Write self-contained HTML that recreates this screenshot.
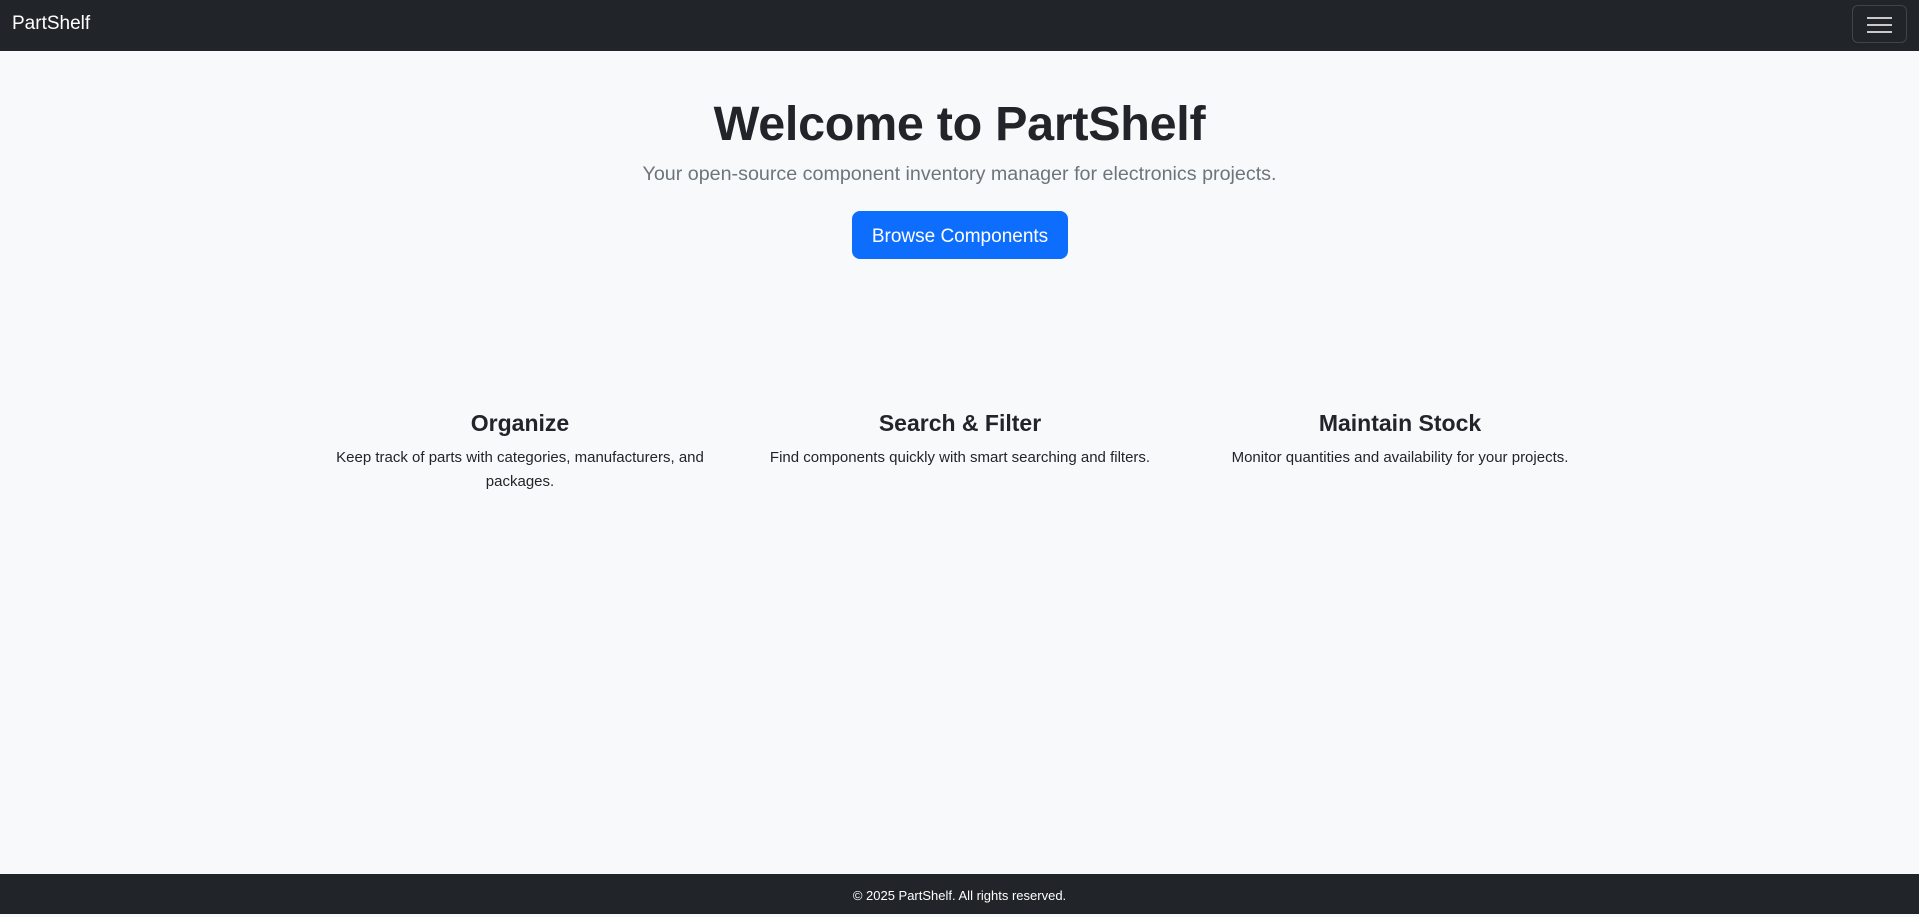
<!DOCTYPE html>
<html><head><meta charset="utf-8"><style>
*{box-sizing:border-box;margin:0;padding:0}
body{width:1919px;height:914px;background:#f8f9fa;font-family:"Liberation Sans",sans-serif;color:#212529;position:relative;overflow:hidden}
nav{height:51px;background:#212529;position:relative}
.brand{position:absolute;left:12px;top:13px;color:#fff;font-size:19px}
.tog{position:absolute;left:1852px;top:5px;width:55px;height:38px;border:1px solid rgba(255,255,255,.15);border-radius:6px}
.tog i{position:absolute;left:14px;width:25px;height:2px;background:#c8c9ca}
h1{position:absolute;top:96px;left:0;width:100%;text-align:center;font-size:48.5px;font-weight:bold;letter-spacing:-0.3px}
.lead{position:absolute;top:163px;width:100%;text-align:center;font-size:19.7px;color:#6c757d}
.btn{position:absolute;left:852px;top:211px;width:216px;height:48px;background:#0d6efd;color:#fff;border-radius:8px;font-size:19px;text-align:center;line-height:51px}
.col{position:absolute;top:409px;width:416px;text-align:center}
.col h4{font-size:23px;font-weight:bold;margin-bottom:8px;line-height:28px}
.col p{font-size:15px;line-height:24px;position:relative;top:1px}
footer{position:absolute;left:0;bottom:0;width:100%;height:40px;background:#212529;color:#fff;font-size:13px;text-align:center;line-height:43px}
</style></head><body>
<nav><div class="brand">PartShelf</div><div class="tog"><i style="top:11px"></i><i style="top:18px"></i><i style="top:25px"></i></div></nav>
<h1>Welcome to PartShelf</h1>
<div class="lead">Your open-source component inventory manager for electronics projects.</div>
<div class="btn">Browse Components</div>
<div class="col" style="left:312px"><h4>Organize</h4><p>Keep track of parts with categories, manufacturers, and packages.</p></div>
<div class="col" style="left:752px"><h4>Search &amp; Filter</h4><p>Find components quickly with smart searching and filters.</p></div>
<div class="col" style="left:1192px"><h4>Maintain Stock</h4><p>Monitor quantities and availability for your projects.</p></div>
<footer>© 2025 PartShelf. All rights reserved.</footer>
</body></html>
